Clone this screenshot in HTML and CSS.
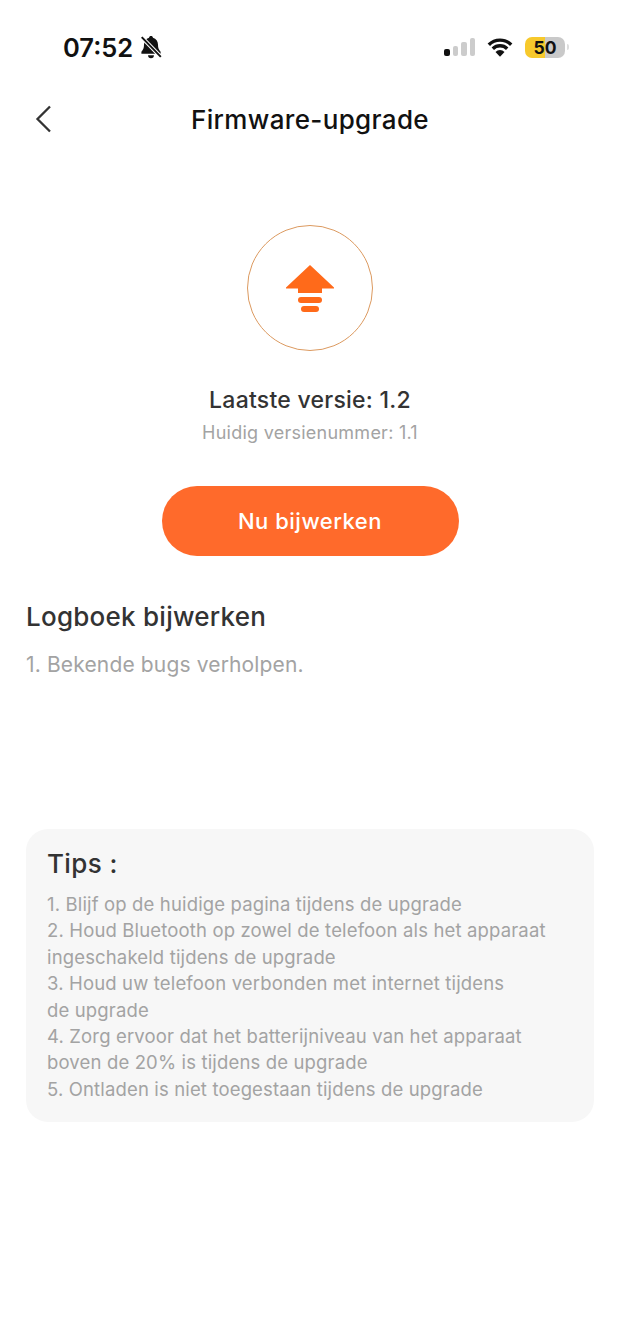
FILE: index.html
```html
<!DOCTYPE html>
<html lang="nl">
<head>
  <meta charset="UTF-8">
  <title>Firmware-upgrade</title>
  <link rel="stylesheet" href="styles.css">
</head>
<body>
  <div class="status-bar">
    <div class="status-left">
      <span class="time">07:52</span>
      <svg class="bell" width="24" height="24" viewBox="0 0 22 22">
        <path d="M11 1c1 0 1.700.6 1.800 1.500 2.900.8 4.600 3.100 4.600 6.300 0 3.400.8 5 2.400 6.600v1.800H2.200v-1.800C3.800 13.800 4.600 12.200 4.600 8.800c0-3.200 1.700-5.500 4.600-6.300C9.300 1.600 10 1 11 1z" fill="#111"/>
        <path d="M8.300 18.500h5.400a2.700 2.700 0 0 1-5.400 0z" fill="#111"/>
        <path d="M2 1.500l18 18.500" stroke="#fff" stroke-width="3.600"/>
        <path d="M2.500 2l17.500 18" stroke="#111" stroke-width="1.800"/>
      </svg>
    </div>
    <div class="status-right">
      <div class="signal">
        <span class="bar bar-1"></span>
        <span class="bar bar-2"></span>
        <span class="bar bar-3"></span>
        <span class="bar bar-4"></span>
      </div>
      <svg class="wifi" width="26" height="20" viewBox="0 0 26 20">
        <path d="M1.800 7.800a15.800 15.800 0 0 1 22.400 0M5.800 11.800a10.200 10.200 0 0 1 14.400 0" fill="none" stroke="#111" stroke-width="3.400"/>
        <path d="M13 19.800l-4.500-4.900a6.200 6.200 0 0 1 9 0z" fill="#111"/>
      </svg>
      <div class="battery"><span class="battery-level">50</span></div>
      <span class="battery-cap"></span>
    </div>
  </div>

  <div class="nav">
    <svg class="back" width="18" height="30" viewBox="0 0 18 30">
      <path d="M15 2.500L2.500 15 15 27.500" fill="none" stroke="#333" stroke-width="2.300"/>
    </svg>
    <h1>Firmware-upgrade</h1>
  </div>

  <div class="version">
    <div class="circle">
      <svg width="50" height="50" viewBox="0 0 50 50">
        <path d="M25 2L49 24.500V25.500H37V30H13V25.500H1V24.500z" fill="#ff6a1a"/>
        <rect x="13" y="34" width="24" height="6" rx="3" fill="#ff6a1a"/>
        <rect x="16" y="43" width="18" height="6" rx="3" fill="#ff6a1a"/>
      </svg>
    </div>
    <div class="latest">Laatste versie: 1.2</div>
    <div class="current">Huidig versienummer: 1.1</div>
    <button class="update-btn">Nu bijwerken</button>
  </div>

  <div class="log">
    <h2>Logboek bijwerken</h2>
    <p>1. Bekende bugs verholpen.</p>
  </div>

  <div class="tips">
    <h3>Tips :</h3>
    <p>1. Blijf op de huidige pagina tijdens de upgrade</p>
    <p>2. Houd Bluetooth op zowel de telefoon als het apparaat ingeschakeld tijdens de upgrade</p>
    <p>3. Houd uw telefoon verbonden met internet tijdens<br>de upgrade</p>
    <p>4. Zorg ervoor dat het batterijniveau van het apparaat<br>boven de 20% is tijdens de upgrade</p>
    <p>5. Ontladen is niet toegestaan tijdens de upgrade</p>
  </div>
</body>
</html>
```

FILE: styles.css
```css
* {
  box-sizing: border-box;
}

body {
  margin: 0;
  background: #fff;
  font-family: Inter, "Noto Sans", sans-serif;
  color: #333;
}

.status-bar {
  display: flex;
  justify-content: space-between;
  align-items: center;
  height: 32px;
  margin-top: 31px;
  padding: 0 51px 0 63px;
}

.status-left {
  display: flex;
  align-items: center;
  gap: 6px;
}

.time {
  font-size: 25.5px;
  font-weight: 600;
  color: #111;
}

.status-right {
  display: flex;
  align-items: center;
}

.signal {
  display: flex;
  align-items: flex-end;
  gap: 3px;
  height: 18px;
  margin-right: 12px;
}

.bar {
  width: 5.500px;
  background: #ccc;
  border-radius: 2px;
}

.bar-1 { height: 7px; background: #111; }
.bar-2 { height: 10px; }
.bar-3 { height: 14px; }
.bar-4 { height: 18px; }

.battery {
  width: 40px;
  height: 21px;
  margin-left: 12px;
  border-radius: 7px;
  overflow: hidden;
  background: linear-gradient(to right, #f7c92c 0 50%, #c9c9c9 50%);
  text-align: center;
}

.battery-level {
  font-size: 17.500px;
  line-height: 21px;
  font-weight: 700;
  color: #111;
}

.battery-cap {
  width: 2px;
  height: 6px;
  margin-left: 2px;
  background: #ddd;
  border-radius: 0 2px 2px 0;
}

.nav {
  position: relative;
  height: 50px;
  margin-top: 32px;
}

.nav h1 {
  margin: 0;
  text-align: center;
  font-size: 26px;
  line-height: 50px;
  font-weight: 500;
  letter-spacing: 0.35px;
  color: #111;
}

.back {
  position: absolute;
  left: 35px;
  top: 9px;
}

.version {
  display: flex;
  flex-direction: column;
  align-items: center;
  margin-top: 80px;
}

.circle {
  display: flex;
  align-items: center;
  justify-content: center;
  width: 126px;
  height: 126px;
  border: 1.500px solid #dc9a60;
  border-radius: 50%;
}

.latest {
  margin-top: 34px;
  font-size: 23px;
  line-height: 30px;
  font-weight: 500;
  letter-spacing: 0.25px;
  color: #333;
}

.current {
  margin-top: 6px;
  font-size: 18px;
  line-height: 24px;
  letter-spacing: 0.25px;
  color: #a3a3a3;
}

.update-btn {
  width: 297px;
  height: 70px;
  margin-top: 41px;
  border: none;
  border-radius: 35px;
  background: #ff6a2b;
  color: #fff;
  font-family: inherit;
  font-size: 22px;
  font-weight: 500;
  letter-spacing: 0.5px;
}

.log {
  height: 273px;
  padding: 44px 26px 0;
}

.log h2 {
  margin: 0;
  font-size: 26px;
  line-height: 34px;
  font-weight: 500;
  letter-spacing: 0.25px;
  color: #333;
}

.log p {
  margin: 18px 0 0;
  font-size: 21px;
  line-height: 26px;
  letter-spacing: 0.15px;
  color: #a3a3a3;
}

.tips {
  margin: 0 26px;
  padding: 18px 21px 20px;
  min-height: 293px;
  background: #f7f7f7;
  border-radius: 22px;
}

.tips h3 {
  margin: 0 0 10px;
  font-size: 26px;
  line-height: 34px;
  font-weight: 500;
  letter-spacing: 0.4px;
  color: #333;
}

.tips p {
  margin: 0;
  font-size: 18.500px;
  line-height: 26.400px;
  letter-spacing: 0.15px;
  color: #a3a3a3;
}
```
